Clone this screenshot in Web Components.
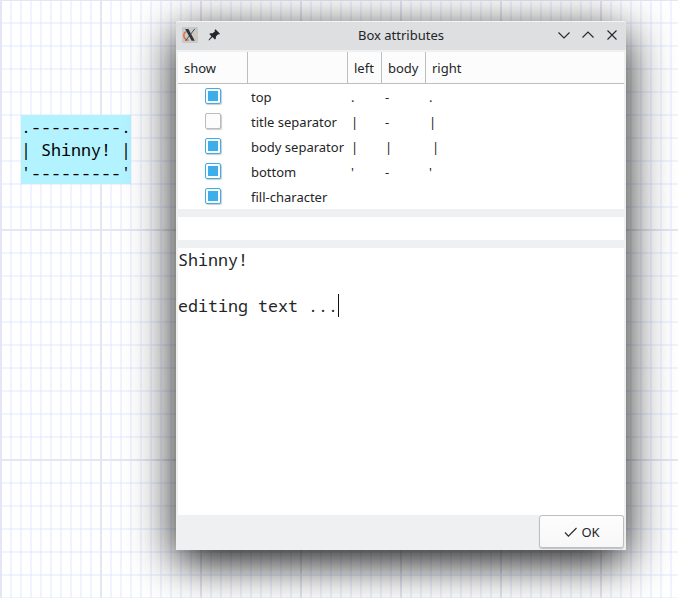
<!DOCTYPE html>
<html lang="en">
<head>
<meta charset="utf-8">
<title>Box attributes</title>
<style>
html,body{margin:0;width:678px;height:598px;overflow:hidden;background:#fff}
</style>
</head>
<body>
<grid-canvas>
  <ascii-box slot="shape"></ascii-box>
  <dialog-window slot="window" heading="Box attributes">
    <attribute-table>
      <attribute-row name="top" on left="." mid="-" right="."></attribute-row>
      <attribute-row name="title separator" left="|" mid="-" right="|"></attribute-row>
      <attribute-row name="body separator" on left="|" mid="|" right="|" nudge></attribute-row>
      <attribute-row name="bottom" on left="'" mid="-" right="'"></attribute-row>
      <attribute-row name="fill-character" on></attribute-row>
    </attribute-table>
    <title-field></title-field>
    <text-editor></text-editor>
    <ok-button slot="footer">OK</ok-button>
  </dialog-window>
</grid-canvas>
<script>
const define = (name, html, setup) => customElements.define(name, class extends HTMLElement {
  constructor() {
    super();
    this.attachShadow({mode: 'open'}).innerHTML = html;
  }
  connectedCallback() { if (setup) setup(this, this.shadowRoot); }
});

define('grid-canvas', `<style>
:host{display:block;position:relative;width:678px;height:598px;overflow:hidden;
 background:
 repeating-linear-gradient(90deg,#e3e6f3 0 2px,transparent 2px 100px),
 repeating-linear-gradient(180deg,#e3e6f3 0 2px,transparent 2px 230px) 0 -1px,
 repeating-linear-gradient(90deg,#dce6ff75 0 2px,transparent 2px 10px),
 repeating-linear-gradient(180deg,#dce6ff75 0 2px,transparent 2px 23px) 0 -1px,
 #fff;background-size:100% 600px}
::slotted([slot=shape]){position:absolute;left:21px;top:115px}
::slotted([slot=window]){position:absolute;left:176px;top:21px}
</style><slot name="shape"></slot><slot name="window"></slot>`);

define('ascii-box', `<style>
:host{display:block;width:110px;height:69px;background:#b3f2ff;color:#000}
pre{margin:0;font:16.66px/23px "Noto Sans Mono","DejaVu Sans Mono",monospace}
</style><pre>.---------.
| Shinny! |
'---------'</pre>`);

define('dialog-window', `<style>
:host{display:flex;flex-direction:column;width:450px;height:529px;box-sizing:border-box;background:#eff0f1;
 border-radius:3px 3px 0 0;box-shadow:0 12px 46px rgba(0,0,0,.92);font:13px "Noto Sans",sans-serif;color:#232629}
header{position:relative;height:29px;box-sizing:border-box;display:flex;align-items:center;background:#dedfe1;
 border-top:1px solid #f5f5f6;border-radius:3px 3px 0 0;padding:0 6px}
.t{flex:1;text-align:center;font-size:13px;margin-top:-2px}
svg{display:block}
.l,.r{width:64px;display:flex;gap:8px;margin-top:-2px}
main{flex:1;display:flex;flex-direction:column;padding:2px 2px 0}
footer{display:flex;justify-content:flex-end;height:35px;padding-right:2px}
</style>
<header>
 <div class="l">
  <svg width="16" height="16" viewBox="0 0 16 16"><rect width="16" height="16" rx="1" fill="#c5cbcd"/><path d="M4.5 4.3C1 6 .9 10 3.8 12.3c1 .8 2 .9 3 .9" fill="none" stroke="#f06a35" stroke-width="1.5"/><path d="M11.5 4.3c4 2 3.5 6.5 0 8.3" fill="none" stroke="#e9c6a0" stroke-width="1.3"/><path d="M12.8 1.8 3.4 14" stroke="#4b5053" stroke-width="1"/><path d="M3.2 2h3.2l6.4 11.8H9.6z" fill="#303437"/></svg>
  <svg width="16" height="16" viewBox="0 0 16 16"><path d="M9.5 2.2 14 6.7 13 7.6 12.1 7.2 9.9 9.4 9.9 11.5 8.9 12.4 6.5 10.1 3 13.4 2.5 12.9 5.4 9.2 3.3 7.1 4.4 6.2 6.7 6.3 9 4.2 8.5 3.2z" fill="#232629"/></svg>
 </div>
 <div class="t"></div>
 <div class="r">
  <svg width="16" height="16" viewBox="0 0 16 16"><path d="M2.5 5.5 8 11l5.5-5.5" fill="none" stroke="#232629" stroke-width="1.1"/></svg>
  <svg width="16" height="16" viewBox="0 0 16 16"><path d="M2.5 10.5 8 5l5.5 5.5" fill="none" stroke="#232629" stroke-width="1.1"/></svg>
  <svg width="16" height="16" viewBox="0 0 16 16"><path d="m3.5 3.5 9 9m0-9-9 9" fill="none" stroke="#232629" stroke-width="1.1"/></svg>
 </div>
</header>
<main><slot></slot></main>
<footer><slot name="footer"></slot></footer>`,
 (h, r) => r.querySelector('.t').textContent = h.getAttribute('heading'));

define('attribute-table', `<style>
:host{display:block;height:157px;background:#fff}
.h{display:grid;grid-template-columns:70px 100px 34px 44px 1fr;height:32px;box-sizing:border-box;background:#fcfcfc;border-bottom:1px solid #bcbebf;line-height:32px}
.h span{padding-left:6px;border-right:1px solid #bcbebf;box-sizing:border-box}
.h span:last-child{border:0}
</style><div class="h"><span>show</span><span></span><span>left</span><span>body</span><span>right</span></div><slot></slot>`);

define('attribute-row', `<style>
:host{display:grid;grid-template-columns:70px 100px 34px 44px 1fr;height:25px;line-height:27px;white-space:nowrap}
i{display:block;box-sizing:border-box;width:16px;height:16px;margin:4px 0 0 27px;border:1px solid #b9bbbc;border-radius:2px;background:#fcfcfc;box-shadow:1px 1px 1px #0003}
:host([on]) i{border-color:#3daee9;background:linear-gradient(#3daee9,#3daee9) center/10px 10px no-repeat #fcfcfc}
span{padding-left:3px}
:host([nudge]) .d{padding-left:6px}
</style><i></i><span class="a"></span><span class="b"></span><span class="c"></span><span class="d"></span>`,
 (h, r) => {
  for (const [cls, attr] of [['a','name'],['b','left'],['c','mid'],['d','right']])
    r.querySelector('.' + cls).textContent = h.getAttribute(attr) || '';
 });

define('title-field', `<style>:host{display:block;height:23px;margin:8px 0;background:#fff}</style>`);

define('text-editor', `<style>
:host{display:block;flex:1;background:#fff;color:#232629}
pre{margin:0;font:16.66px/23px "Noto Sans Mono","DejaVu Sans Mono",monospace}
b{display:inline-block;width:1px;height:23px;background:#111;vertical-align:top}
</style><pre>Shinny!

editing text ...<b></b></pre>`);

define('ok-button', `<style>
:host{display:flex;align-items:center;justify-content:center;gap:4px;width:85px;height:33px;box-sizing:border-box;border:1px solid #bcbebf;border-radius:3px;background:linear-gradient(#fdfdfd,#f7f7f8);box-shadow:0 1px 1px #0003}
svg{display:block}
</style><svg width="14" height="16" viewBox="0 0 14 16"><path d="m2 8.5 3.4 3.6L13.5 4" fill="none" stroke="#232629" stroke-width="1.1"/></svg><slot></slot>`);
</script>
</body>
</html>
